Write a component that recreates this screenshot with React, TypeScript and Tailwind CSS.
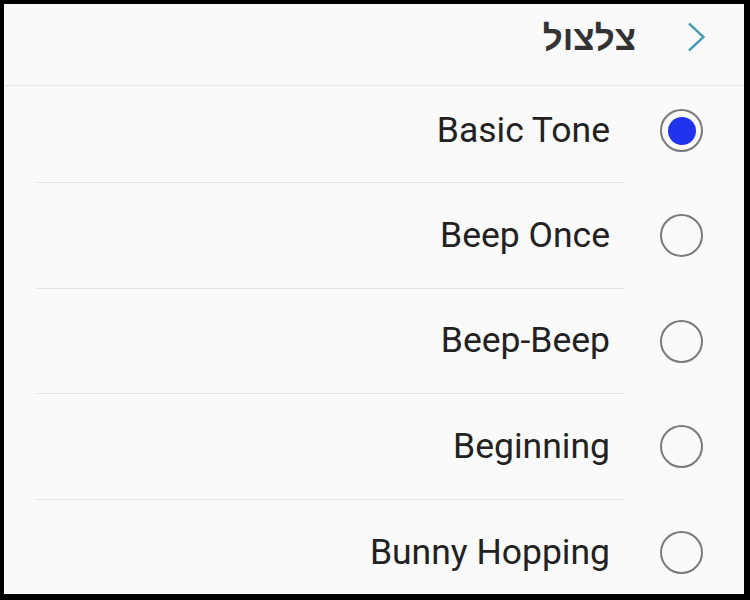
import React from "react";

const items = ["Basic Tone", "Beep Once", "Beep-Beep", "Beginning", "Bunny Hopping"];

function Radio({ checked }: { checked: boolean }) {
  return (
    <div className="w-[43px] h-[43px] rounded-full border-[2.5px] border-[#7a7a7a] flex items-center justify-center shrink-0">
      {checked && <div className="w-[28px] h-[28px] rounded-full bg-[#2233ee]" />}
    </div>
  );
}

export default function App() {
  return (
    <div className="w-[750px] h-[600px] bg-black p-[4px] pr-[6px] pb-[6px]" style={{ fontFamily: "Roboto, 'Noto Sans', sans-serif" }}>
      <div className="w-full h-full bg-[#fafafa] overflow-hidden flex flex-col">
        <div className="h-[82px] shrink-0 border-b border-[#e6e6e6] flex items-center justify-end pr-[38px] pb-[16px]">
          <span className="text-[35px] font-bold text-[#333] mr-[50px] leading-none" style={{ fontFamily: "'Noto Sans', Roboto, sans-serif" }}>צלצול</span>
          <svg width="20" height="30" viewBox="0 0 20 30">
            <path d="M3 1.5 L17.5 15 L3 28.5" fill="none" stroke="#4a9bb5" strokeWidth="2.4" />
          </svg>
        </div>
        {items.map((t, i) => (
          <div key={t} className={`flex shrink-0 ${i === 0 ? "h-[97px]" : "h-[105.5px]"}`}>
            <div className={`ml-[32px] w-[588px] h-full flex items-center justify-end pr-[14px] ${i === 0 ? "pb-[6px]" : ""} ${i < items.length - 1 ? "border-b border-[#e3e3e3]" : ""}`}>
              <span className="text-[35.5px] text-[#222] leading-none">{t}</span>
            </div>
            <div className={`ml-[36px] h-full flex items-center ${i === 0 ? "pb-[8px]" : ""}`}>
              <Radio checked={i === 0} />
            </div>
          </div>
        ))}
      </div>
    </div>
  );
}
